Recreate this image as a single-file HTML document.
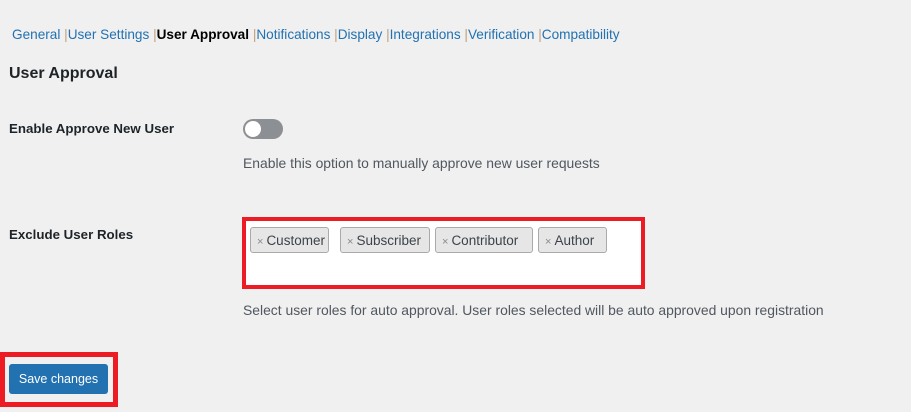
<!DOCTYPE html>
<html><head><style>
body{margin:0;width:911px;height:412px;background:#f0f0f1;font-family:"Liberation Sans",sans-serif;font-size:13px;color:#1d2327;position:relative;overflow:hidden}
.a{position:absolute;white-space:nowrap}
.nav a{color:#2271b1;text-decoration:none}
.sep{color:#c3a07a}
.tag{position:absolute;top:227px;height:26px;line-height:25px;background:#e6e6e6;border:1px solid #aaa;border-radius:3px;font-size:13.5px;color:#3c434a;box-sizing:border-box;padding-left:6px;overflow:hidden}
.tag span{color:#888;font-size:11px;margin-right:3px}
</style></head><body>
<div class="a nav" style="left:12px;top:27px;font-size:13.6px"><a>General</a> <span class="sep">|</span><a>User Settings</a> <span class="sep">|</span><b style="color:#000">User Approval</b> <span class="sep">|</span><a>Notifications</a> <span class="sep">|</span><a>Display</a> <span class="sep">|</span><a>Integrations</a> <span class="sep">|</span><a>Verification</a> <span class="sep">|</span><a>Compatibility</a></div>
<div class="a" style="left:9px;top:65px;font-size:16px;font-weight:600">User Approval</div>
<div class="a" style="left:9px;top:121px;font-weight:bold;font-size:13.3px">Enable Approve New User</div>
<div class="a" style="left:243px;top:119px;width:40px;height:20px;border-radius:10px;background:#8c8f94"></div>
<div class="a" style="left:245px;top:121px;width:16px;height:16px;border-radius:50%;background:#fff"></div>
<div class="a" style="left:243px;top:155px;color:#50575e;font-size:13.9px">Enable this option to manually approve new user requests</div>
<div class="a" style="left:9px;top:227px;font-weight:bold;font-size:13.3px">Exclude User Roles</div>
<div class="a" style="left:242px;top:217px;width:395px;height:64px;border:4px solid #ed1c24;background:#fff"></div>
<div class="tag" style="left:250px;width:79px"><span>×</span>Customer</div>
<div class="tag" style="left:340px;width:90px"><span>×</span>Subscriber</div>
<div class="tag" style="left:435px;width:98px"><span>×</span>Contributor</div>
<div class="tag" style="left:538px;width:69px"><span>×</span>Author</div>
<div class="a" style="left:243px;top:302px;color:#50575e;font-size:13.9px">Select user roles for auto approval. User roles selected will be auto approved upon registration</div>
<div class="a" style="left:0;top:352px;width:108px;height:45px;border:5px solid #ed1c24"></div>
<div class="a" style="left:9px;top:364px;width:99px;height:30px;background:#2271b1;border-radius:3px;color:#fff;font-size:12.5px;line-height:30px;text-align:center">Save changes</div>
</body></html>
